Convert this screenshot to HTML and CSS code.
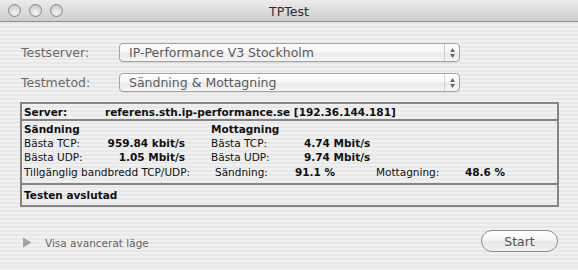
FILE: index.html
```html
<!DOCTYPE html>
<html>
<head>
<meta charset="utf-8">
<link rel="stylesheet" href="styles.css">
</head>
<body>
<div class="window">
  <div class="titlebar">
    <div class="lights">
      <span class="light"></span><span class="light"></span><span class="light"></span>
    </div>
    <div class="title">TPTest</div>
  </div>
  <div class="content">
    <div class="form">
      <div class="row">
        <span class="label">Testserver:</span>
        <div class="popup"><span class="popup-text">IP-Performance V3 Stockholm</span><span class="stepper"><svg width="7" height="12" viewBox="0 0 7 12"><path d="M3.5 1 L6 5 L1 5 Z" fill="#6a6a6a"/><path d="M3.5 11 L6 7 L1 7 Z" fill="#6a6a6a"/></svg></span></div>
      </div>
      <div class="row">
        <span class="label">Testmetod:</span>
        <div class="popup"><span class="popup-text">Sändning &amp; Mottagning</span><span class="stepper"><svg width="7" height="12" viewBox="0 0 7 12"><path d="M3.5 1 L6 5 L1 5 Z" fill="#6a6a6a"/><path d="M3.5 11 L6 7 L1 7 Z" fill="#6a6a6a"/></svg></span></div>
      </div>
    </div>
    <div class="box">
      <div class="server-row">
        <span class="c1 b">Server:</span>
        <span class="b">referens.sth.ip-performance.se [192.36.144.181]</span>
      </div>
      <div class="stats">
        <div class="grid">
          <span class="g1 b">Sändning</span><span class="g2"></span><span class="g3 b">Mottagning</span><span class="g4"></span>
          <span class="g1">Bästa TCP:</span><span class="g2 b">959.84 kbit/s</span><span class="g3">Bästa TCP:</span><span class="g4 b">4.74 Mbit/s</span>
          <span class="g1">Bästa UDP:</span><span class="g2 b">1.05 Mbit/s</span><span class="g3">Bästa UDP:</span><span class="g4 b">9.74 Mbit/s</span>
        </div>
        <div class="bw">
          <span class="bw1">Tillgänglig bandbredd TCP/UDP:</span>
          <span class="bw2">Sändning:</span>
          <span class="bw3 b">91.1 %</span>
          <span class="bw4">Mottagning:</span>
          <span class="b">48.6 %</span>
        </div>
      </div>
      <div class="status b">Testen avslutad</div>
    </div>
    <div class="footer">
      <div class="disclosure">
        <svg width="10" height="11" viewBox="0 0 10 11"><path d="M1 0.5 L9.5 5.5 L1 10.5 Z" fill="#a3a3a3"/></svg>
        <span>Visa avancerat läge</span>
      </div>
      <div class="button">Start</div>
    </div>
  </div>
</div>
</body>
</html>
```
FILE: styles.css
```css
* { box-sizing: border-box; }
html, body { margin: 0; padding: 0; }
body {
  width: 578px;
  height: 270px;
  overflow: hidden;
  font-family: "DejaVu Sans", sans-serif;
}
.window {
  width: 578px;
  height: 270px;
  background: repeating-linear-gradient(to bottom, #f0f0f0 0 2px, #e8e8e8 2px 4px);
}
.titlebar {
  height: 22px;
  position: relative;
  background: linear-gradient(to bottom, #ececec, #cdcdcd);
  border-bottom: 1px solid #8f8f8f;
  display: flex;
  align-items: center;
  justify-content: center;
}
.lights {
  position: absolute;
  left: 8px;
  top: 4px;
  display: flex;
  gap: 8px;
}
.light {
  width: 13px;
  height: 13px;
  border-radius: 50%;
  border: 1px solid #8c8c8c;
  background: radial-gradient(circle at 50% 70%, #f4f4f4 0, #d8d8d8 55%, #b8b8b8 100%);
}
.title {
  font-size: 12.5px;
  color: #2e2e2e;
  margin-top: 1px;
}
.content {
  padding: 21px 19px 0 20px;
}
.form {
  display: flex;
  flex-direction: column;
  gap: 11px;
}
.row {
  display: flex;
  align-items: center;
}
.label {
  width: 99px;
  padding-left: 1px;
  font-size: 12.5px;
  color: #6a6a6a;
}
.popup {
  width: 341px;
  height: 19px;
  border: 1px solid #a3a3a3;
  border-radius: 4px;
  background: linear-gradient(to bottom, #ffffff 0, #f7f7f7 45%, #ebebeb 55%, #f4f4f4 100%);
  display: flex;
  align-items: center;
  box-shadow: 0 1px 0 rgba(0,0,0,0.06);
}
.popup-text {
  flex: 1;
  padding-left: 9px;
  font-size: 12.5px;
  color: #5a5a5a;
}
.stepper {
  width: 15px;
  height: 100%;
  border-left: 1px solid #cfcfcf;
  display: flex;
  align-items: center;
  justify-content: center;
}
.box {
  margin-top: 10px;
  width: 539px;
  border: 2px solid #858585;
  font-size: 10.5px;
  color: #111;
  white-space: nowrap;
}
.b { font-weight: bold; }
.server-row {
  height: 17px;
  display: flex;
  align-items: center;
  padding-left: 2px;
  border-bottom: 2px solid #858585;
}
.c1 { width: 81px; }
.stats {
  padding: 1px 0 4px 2px;
  border-bottom: 2px solid #858585;
}
.grid {
  display: grid;
  grid-template-columns: 81px 80px 119px 65px;
  grid-auto-rows: 14px;
  align-items: center;
}
.g2, .g4 { text-align: right; }
.g3 { padding-left: 26px; }
.bw {
  display: flex;
  height: 15px;
  align-items: center;
}
.bw1 { width: 191px; }
.bw2 { width: 80px; }
.bw3 { width: 81px; }
.bw4 { width: 89px; }
.status {
  height: 20px;
  display: flex;
  align-items: center;
  padding-left: 2px;
}
.footer {
  margin-top: 23px;
  display: flex;
  align-items: center;
  justify-content: space-between;
}
.disclosure {
  display: flex;
  align-items: center;
  padding-left: 2px;
  gap: 13px;
  font-size: 10.5px;
  color: #666;
  margin-top: 3px;
}
.button {
  width: 77px;
  height: 22px;
  border: 1px solid #8e8e8e;
  border-radius: 11px;
  background: linear-gradient(to bottom, #ffffff 0, #f6f6f6 45%, #e6e6e6 55%, #f2f2f2 100%);
  display: flex;
  align-items: center;
  justify-content: center;
  font-size: 12.5px;
  color: #555;
  margin-right: 1px;
}
```
